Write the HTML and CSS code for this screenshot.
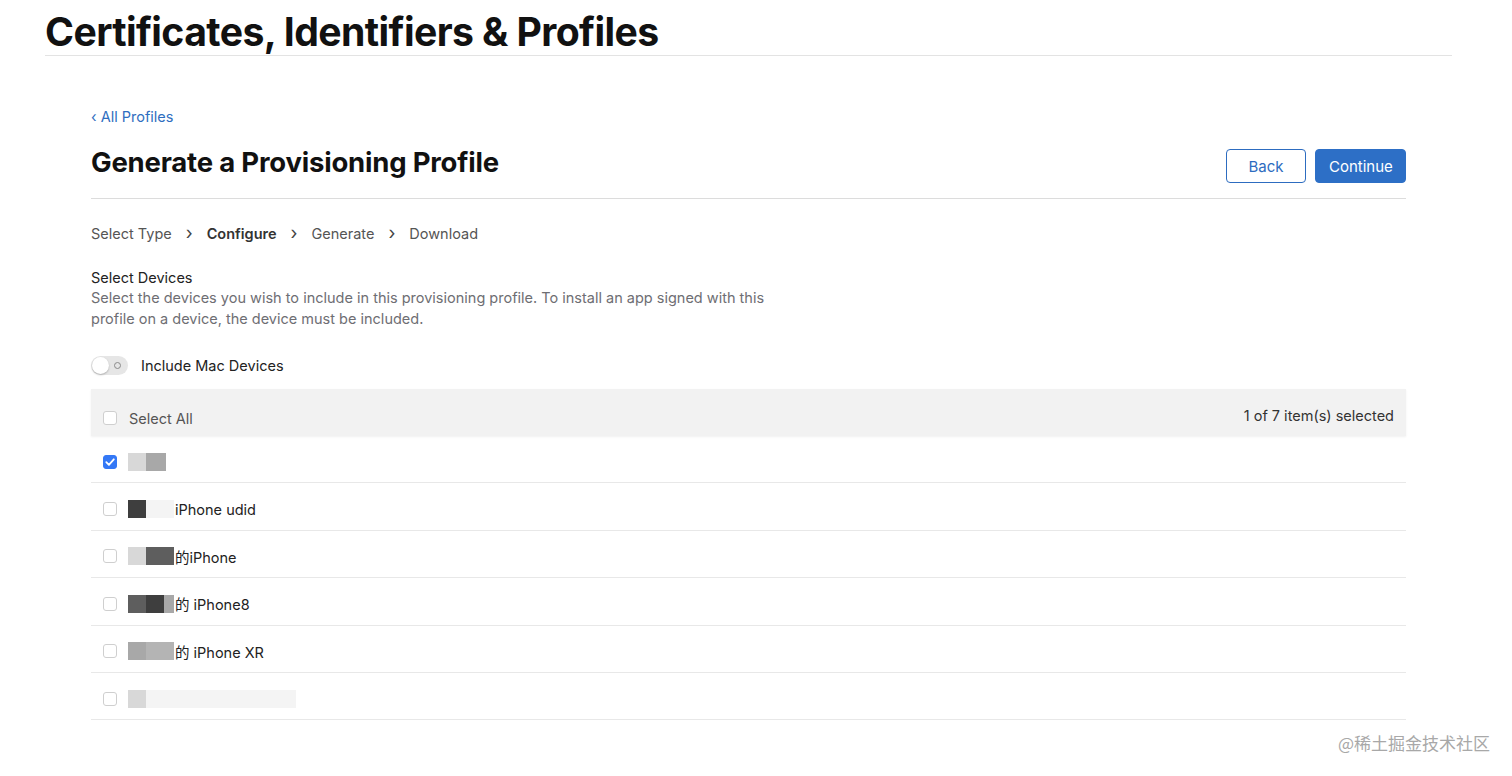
FILE: index.html
```html
<!DOCTYPE html>
<html>
<head>
<meta charset="utf-8">
<link rel="stylesheet" href="styles.css">
</head>
<body>
<header class="top">
  <h1 class="site-title">Certificates, Identifiers &amp; Profiles</h1>
</header>
<main class="content">
  <a class="back-link" href="#">‹ All Profiles</a>
  <div class="page-head">
    <h2 class="page-title">Generate a Provisioning Profile</h2>
    <div class="actions">
      <button class="btn btn-secondary">Back</button>
      <button class="btn btn-primary">Continue</button>
    </div>
  </div>
  <nav class="steps">
    <span class="step">Select Type</span>
    <span class="chev">›</span>
    <span class="step current">Configure</span>
    <span class="chev">›</span>
    <span class="step">Generate</span>
    <span class="chev">›</span>
    <span class="step">Download</span>
  </nav>
  <section class="section">
    <div class="section-title">Select Devices</div>
    <p class="section-desc">Select the devices you wish to include in this provisioning profile. To install an app signed with this profile on a device, the device must be included.</p>
  </section>
  <div class="toggle-row">
    <span class="toggle"><span class="knob"></span><span class="off-mark"></span></span>
    <span class="toggle-label">Include Mac Devices</span>
  </div>
  <div class="table">
    <div class="table-head">
      <label class="cell-check"><span class="cb"></span><span class="head-label">Select All</span></label>
      <span class="count">1 of 7 item(s) selected</span>
    </div>
    <div class="row">
      <span class="cb checked"><svg viewBox="0 0 14 14" width="14" height="14"><path d="M3.3 7.2 L5.9 9.8 L10.8 4.3" fill="none" stroke="#fff" stroke-width="1.8" stroke-linecap="round" stroke-linejoin="round"/></svg></span>
      <span class="name"><span class="blur b-light w18"></span><span class="blur b-mid w20"></span></span>
    </div>
    <div class="row">
      <span class="cb"></span>
      <span class="name"><span class="blur b-dark w18"></span><span class="blur b-faint w28"></span><span class="txt">iPhone udid</span></span>
    </div>
    <div class="row">
      <span class="cb"></span>
      <span class="name"><span class="blur b-light w18"></span><span class="blur b-dark2 w28"></span><span class="txt">的iPhone</span></span>
    </div>
    <div class="row">
      <span class="cb"></span>
      <span class="name"><span class="blur b-dark2 w18"></span><span class="blur b-dark w18"></span><span class="blur b-mid w10"></span><span class="txt">的 iPhone8</span></span>
    </div>
    <div class="row">
      <span class="cb"></span>
      <span class="name"><span class="blur b-mid w18"></span><span class="blur b-mid2 w28"></span><span class="txt">的 iPhone XR</span></span>
    </div>
    <div class="row">
      <span class="cb"></span>
      <span class="name"><span class="blur b-light w18"></span><span class="blur b-faint w150"></span></span>
    </div>
  </div>
</main>
<div class="watermark">@稀土掘金技术社区</div>
</body>
</html>
```
FILE: styles.css
```css
* { box-sizing: border-box; }
html, body { margin: 0; padding: 0; background: #fff; }
body {
  font-family: Inter, "Noto Sans", "Liberation Sans", "Noto Sans CJK SC", sans-serif;
  color: #1d1d1f;
  width: 1512px;
  height: 776px;
  overflow: hidden;
  position: relative;
}
.top {
  margin: 0 60px 0 45px;
  border-bottom: 1px solid #e3e3e3;
  height: 56px;
  padding-top: 10px;
}
.site-title {
  margin: 0;
  font-size: 39.2px;
  line-height: 44px;
  font-weight: 700;
  letter-spacing: -0.6px;
  color: #111;
}
.content {
  margin: 0 106px 0 91px;
  padding-top: 52px;
}
.back-link {
  display: block;
  color: #2f6ec0;
  text-decoration: none;
  font-size: 14.5px;
  line-height: 18px;
  height: 18px;
}
.page-head {
  display: flex;
  justify-content: space-between;
  align-items: flex-start;
  border-bottom: 1px solid #dcdcdc;
  height: 73px;
  padding-top: 19px;
}
.page-title {
  margin: 0;
  font-size: 27.5px;
  line-height: 34px;
  font-weight: 700;
  letter-spacing: -0.2px;
  color: #111;
}
.actions {
  display: flex;
  gap: 9px;
  padding-top: 4px;
}
.btn {
  font-family: inherit;
  font-size: 15px;
  height: 34px;
  border-radius: 4px;
  padding: 0 13px;
  cursor: pointer;
}
.btn-secondary {
  width: 80px;
  background: #fff;
  color: #2d6cc0;
  border: 1px solid #2d6cc0;
}
.btn-primary {
  width: 91px;
  background: #2d6fc6;
  color: #fff;
  border: 1px solid #2d6fc6;
}
.steps {
  display: flex;
  align-items: center;
  gap: 0;
  margin-top: 25px;
  font-size: 14.5px;
  line-height: 20px;
  color: #555;
}
.chev {
  font-size: 18px;
  color: #444;
  margin: 0 14px;
  line-height: 20px;
  position: relative;
  top: -1px;
}
.step.current { font-weight: 600; color: #333; }
.section { margin-top: 24px; }
.section-title {
  font-size: 14.5px;
  line-height: 19px;
  color: #222;
}
.section-desc {
  margin: 0;
  font-size: 14.5px;
  line-height: 21px;
  color: #6e6e73;
  max-width: 690px;
}
.toggle-row {
  display: flex;
  align-items: center;
  gap: 13px;
  margin-top: 26px;
  height: 20px;
}
.toggle {
  position: relative;
  width: 37px;
  height: 19px;
  border-radius: 10px;
  background: #e6e6e6;
  display: inline-block;
}
.knob {
  position: absolute;
  left: 1px;
  top: 1px;
  width: 17px;
  height: 17px;
  border-radius: 50%;
  background: #fff;
  box-shadow: 0 1px 2px rgba(0,0,0,0.25);
}
.off-mark {
  position: absolute;
  right: 7px;
  top: 6px;
  width: 7px;
  height: 7px;
  border: 1.3px solid #8a8a8a;
  border-radius: 50%;
}
.toggle-label {
  font-size: 14.5px;
  color: #222;
}
.table { margin-top: 14px; }
.table-head {
  display: flex;
  justify-content: space-between;
  align-items: center;
  background: #f2f2f2;
  height: 47px;
  padding: 0 12px;
  box-shadow: 0 1px 2px rgba(0,0,0,0.06);
}
.cell-check {
  display: flex;
  align-items: center;
  gap: 12px;
  padding-top: 11px;
}
.count { padding-top: 6px; }
.head-label { font-size: 14.5px; color: #555; }
.count { font-size: 14.5px; color: #333; }
.cb {
  width: 14px;
  height: 14px;
  border: 1px solid #cfcfcf;
  border-radius: 3px;
  background: #fff;
  display: inline-flex;
  flex-shrink: 0;
}
.row .cb { margin-top: 5px; }
.cb.checked {
  background: #3478f6;
  border-color: #3478f6;
}
.cb.checked svg { margin: -1px; }
.row {
  display: flex;
  align-items: center;
  gap: 11px;
  height: 47.4px;
  padding: 0 12px;
  border-bottom: 1px solid #e8e8e8;
}
.row:first-of-type { border-bottom-color: #ececec; }
.name {
  display: flex;
  align-items: center;
  font-size: 14.5px;
  color: #222;
  padding-top: 5px;
}
.blur {
  display: inline-block;
  height: 18px;
  filter: blur(0.6px);
}
.w10 { width: 10px; }
.w18 { width: 18px; }
.w20 { width: 20px; }
.w28 { width: 28px; }
.w150 { width: 150px; }
.b-light { background: #d8d8d8; }
.b-faint { background: #f4f4f4; }
.b-mid { background: #a8a8a8; }
.b-mid2 { background: #b4b4b4; }
.b-dark { background: #3e3e3e; }
.b-dark2 { background: #5e5e5e; }
.txt { margin-left: 1px; }
.watermark {
  position: absolute;
  right: 22px;
  bottom: 21px;
  font-size: 17px;
  color: #a8a8a8;
  font-family: "Noto Sans CJK SC", sans-serif;
}
```
